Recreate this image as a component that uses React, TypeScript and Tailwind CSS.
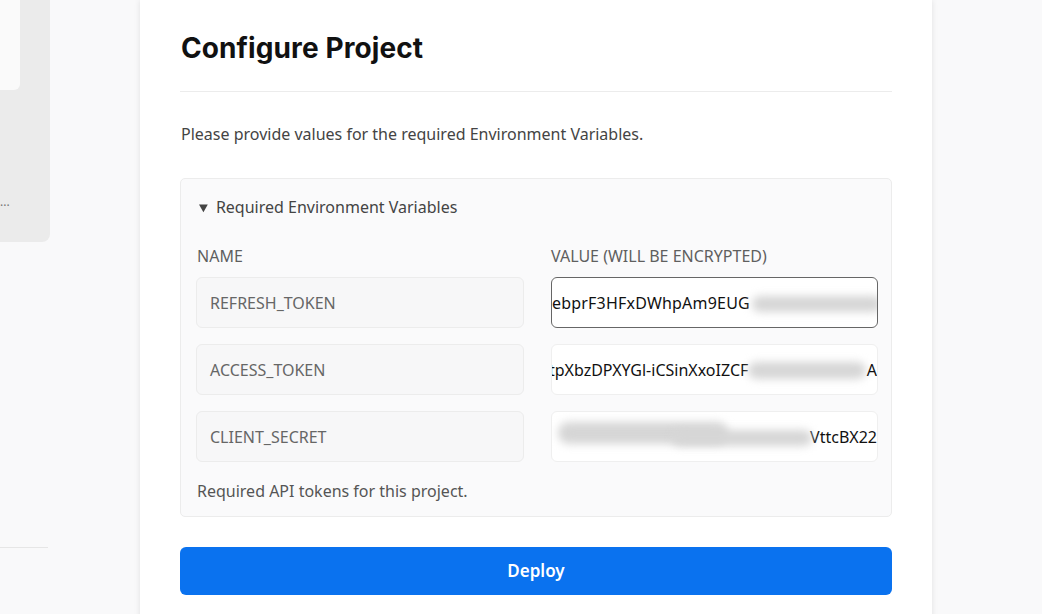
import React from "react";

const body = { fontFamily: '"Noto Sans", "Open Sans", sans-serif' };

function Blur({ className }: { className: string }) {
  return <span className={`absolute rounded-full bg-[#d6d6d6] blur-[4px] ${className}`} />;
}

export default function App() {
  const names = ["REFRESH_TOKEN", "ACCESS_TOKEN", "CLIENT_SECRET"];
  return (
    <div className="flex h-[614px] w-[1042px] overflow-hidden bg-[#f9f9fa]" style={body}>
      {/* left sidebar remnant */}
      <div className="flex w-[90px] shrink-0 flex-col">
        <div className="relative h-[242px] w-[50px] rounded-br-lg bg-[#ebebeb]">
          <div className="h-[90px] w-[20px] rounded-br-md bg-[#fafafa]" />
          <span className="absolute left-0 top-[196px] text-[12px] leading-none text-[#777]">...</span>
        </div>
        <div className="mt-[305px] h-px w-[48px] bg-[#e6e6e6]" />
      </div>

      {/* spacer */}
      <div className="w-[50px] shrink-0" />

      {/* main card */}
      <div className="h-[660px] w-[792px] shrink-0 bg-white px-[40px] pt-[31px] shadow-[0_0_6px_rgba(0,0,0,0.10)]">
        <div className="border-b border-[#ececec] pb-[26px]">
          <h1
            className="pl-[1px] text-[28px] font-bold leading-[34px] tracking-[0.1px] text-[#111]"
            style={{ fontFamily: 'Inter, "Liberation Sans", sans-serif' }}
          >
            Configure Project
          </h1>
        </div>
        <p className="mt-[30px] pl-[1px] text-[16px] leading-[24px] text-[#444]">
          Please provide values for the required Environment Variables.
        </p>

        <div className="mt-[32px] rounded-[5px] border border-[#ececec] bg-[#fafafb] pb-[13px] pl-[15px] pr-[12px] pt-[16px]">
          <div className="flex items-center pl-[1px] text-[16px] leading-[24px] text-[#444]">
            <span className="mr-[6px] scale-x-[1.15] text-[13px] leading-none">▼</span>Required Environment Variables
          </div>
          <div className="mt-[27px] grid grid-cols-[328px_327px] gap-x-[27px]">
            <div className="pl-[1px] text-[16px] leading-[21px] text-[#5f5f5f]">NAME</div>
            <div className="text-[16px] leading-[21px] text-[#5f5f5f]">VALUE (WILL BE ENCRYPTED)</div>
          </div>
          <div className="mt-[10px] flex flex-col gap-[16px]">
            {names.map((n, i) => (
              <div key={n} className="grid grid-cols-[328px_327px] gap-x-[27px]">
                <div className="flex h-[51px] items-center rounded-[6px] border border-[#ececec] bg-[#f7f7f8] pl-[13px] text-[16px] text-[#666]">
                  {n}
                </div>
                <div
                  className={`relative flex h-[51px] items-center overflow-hidden whitespace-nowrap rounded-[6px] border bg-white text-[16px] text-[#111] ${
                    i === 0 ? "border-[#666]" : "border-[#efefef]"
                  }`}
                >
                  {i === 0 && (
                    <>
                      <span className="tracking-[0.2px]">ebprF3HFxDWhpAm9EUG</span>
                      <Blur className="left-[200px] top-[18px] h-[16px] w-[130px]" />
                    </>
                  )}
                  {i === 1 && (
                    <>
                      <span className="-ml-[3px]">tpXbzDPXYGl-iCSinXxoIZCF</span>
                      <Blur className="left-[196px] top-[17px] h-[17px] w-[118px]" />
                      <span className="absolute right-[0px] top-[13px]">A</span>
                    </>
                  )}
                  {i === 2 && (
                    <>
                      <span className="absolute right-[0px] top-[13px]">VttcBX22</span>
                      <Blur className="left-[6px] top-[10px] h-[22px] w-[170px]" />
                      <Blur className="left-[120px] top-[18px] h-[16px] w-[140px]" />
                    </>
                  )}
                </div>
              </div>
            ))}
          </div>
          <p className="mt-[17px] pl-[1px] text-[16px] leading-[24px] text-[#555]">
            Required API tokens for this project.
          </p>
        </div>

        <button className="mt-[30px] flex h-[48px] w-full items-center justify-center rounded-[6px] bg-[#0a72ef] text-[17px] font-semibold text-white">
          Deploy
        </button>
      </div>
    </div>
  );
}
